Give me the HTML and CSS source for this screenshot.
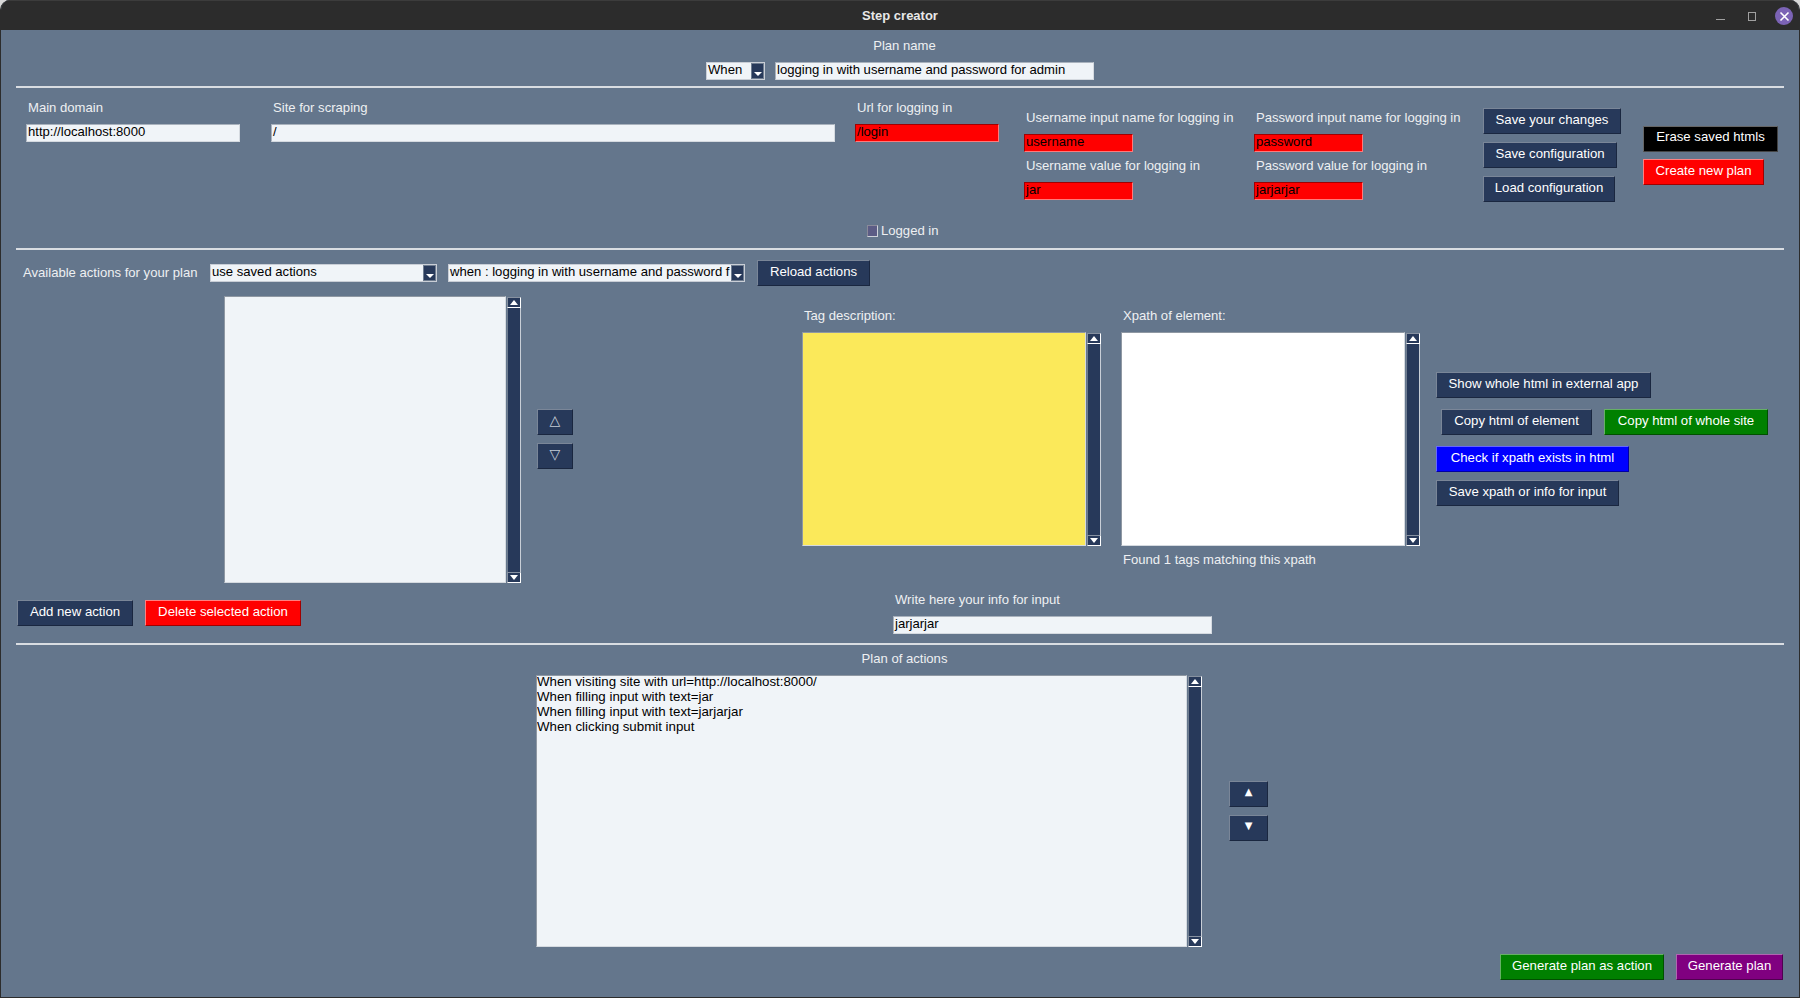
FILE: index.html
```html
<!DOCTYPE html>
<html lang="en">
<head>
<meta charset="utf-8">
<title>Step creator</title>
<link rel="stylesheet" href="styles.css">
</head>
<body>
<div class="window">
  <header class="titlebar">
    <div class="title">Step creator</div>
    <div class="controls">
      <span class="ctl-min"></span>
      <span class="ctl-max"></span>
      <span class="ctl-close"><svg width="11" height="11" viewBox="0 0 11 11"><path d="M1.5 1.5l8 8M9.5 1.5l-8 8" stroke="#fff" stroke-width="1.6" fill="none"/></svg></span>
    </div>
  </header>

  <section class="plan-head">
    <div class="label center">Plan name</div>
    <div class="plan-row">
      <div class="combo w-when"><span class="combo-text">When</span><span class="combo-btn"><i class="arrow"></i></span></div>
      <div class="entry w-plan">logging in with username and password for admin</div>
    </div>
  </section>
  <div class="sep"></div>

  <section class="config">
    <div class="config-row">
      <div class="field f-domain">
        <div class="label lbl-in">Main domain</div>
        <div class="entry">http://localhost:8000</div>
      </div>
      <div class="field f-site">
        <div class="label lbl-in">Site for scraping</div>
        <div class="entry">/</div>
      </div>
      <div class="field f-url">
        <div class="label lbl-in">Url for logging in</div>
        <div class="entry red">/login</div>
      </div>
      <div class="login-grid">
        <div class="field">
          <div class="label lbl-in">Username input name for logging in</div>
          <div class="entry red w-cred">username</div>
        </div>
        <div class="field">
          <div class="label lbl-in">Password input name for logging in</div>
          <div class="entry red w-cred">password</div>
        </div>
        <div class="field">
          <div class="label lbl-in">Username value for logging in</div>
          <div class="entry red w-cred">jar</div>
        </div>
        <div class="field">
          <div class="label lbl-in">Password value for logging in</div>
          <div class="entry red w-cred">jarjarjar</div>
        </div>
      </div>
      <div class="config-btns">
        <div class="btn navy w-138">Save your changes</div>
        <div class="btn navy w-134">Save configuration</div>
        <div class="btn navy w-132">Load configuration</div>
      </div>
      <div class="plan-btns">
        <div class="btn black w-135">Erase saved htmls</div>
        <div class="btn redb w-121">Create new plan</div>
      </div>
    </div>
    <div class="logged"><span class="check"></span><span class="label">Logged in</span></div>
  </section>
  <div class="sep"></div>

  <section class="actions">
    <div class="actions-top">
      <div class="label lbl-avail">Available actions for your plan</div>
      <div class="combo w-use"><span class="combo-text">use saved actions</span><span class="combo-btn"><i class="arrow"></i></span></div>
      <div class="combo w-saved"><span class="combo-text">when : logging in with username and password f</span><span class="combo-btn"><i class="arrow"></i></span></div>
      <div class="btn navy w-113">Reload actions</div>
    </div>
    <div class="actions-body">
      <div class="left-col">
        <div class="list-row">
          <div class="textbox light w-list"></div>
          <div class="scrollbar"><span class="sb-btn"><i class="tri-up"></i></span><span class="sb-trough"></span><span class="sb-btn"><i class="tri-down"></i></span></div>
          <div class="move-btns">
            <div class="btn navy sq36 dim">△</div>
            <div class="btn navy sq36 dim">▽</div>
          </div>
        </div>
        <div class="left-actions">
          <div class="btn navy w-116">Add new action</div>
          <div class="btn redb w-156">Delete selected action</div>
        </div>
      </div>
      <div class="mid-col">
        <div class="boxes">
          <div class="box-col">
            <div class="label lbl-in">Tag description:</div>
            <div class="box-row">
              <div class="textbox yellow w-box"></div>
              <div class="scrollbar"><span class="sb-btn"><i class="tri-up"></i></span><span class="sb-trough"></span><span class="sb-btn"><i class="tri-down"></i></span></div>
            </div>
          </div>
          <div class="box-col">
            <div class="label lbl-in">Xpath of element:</div>
            <div class="box-row">
              <div class="textbox white w-box"></div>
              <div class="scrollbar"><span class="sb-btn"><i class="tri-up"></i></span><span class="sb-trough"></span><span class="sb-btn"><i class="tri-down"></i></span></div>
            </div>
            <div class="label lbl-in found">Found 1 tags matching this xpath</div>
          </div>
        </div>
        <div class="info">
          <div class="label lbl-in">Write here your info for input</div>
          <div class="entry w-info">jarjarjar</div>
        </div>
      </div>
      <div class="right-col">
        <div class="btn navy w-215">Show whole html in external app</div>
        <div class="copy-row">
          <div class="btn navy w-151">Copy html of element</div>
          <div class="btn green w-164">Copy html of whole site</div>
        </div>
        <div class="btn blue w-193">Check if xpath exists in html</div>
        <div class="btn navy w-183 save-x">Save xpath or info for input</div>
      </div>
    </div>
  </section>
  <div class="sep"></div>

  <section class="plan">
    <div class="label center">Plan of actions</div>
    <div class="plan-body">
      <div class="textbox light w-plan-box">
        <div class="plan-lines">
          <div>When visiting site with url=http://localhost:8000/</div>
          <div>When filling input with text=jar</div>
          <div>When filling input with text=jarjarjar</div>
          <div>When clicking submit input</div>
        </div>
      </div>
      <div class="scrollbar"><span class="sb-btn"><i class="tri-up"></i></span><span class="sb-trough"></span><span class="sb-btn"><i class="tri-down"></i></span></div>
      <div class="plan-move">
        <div class="btn navy sq39">▲</div>
        <div class="btn navy sq39">▼</div>
      </div>
    </div>
    <div class="plan-foot">
      <div class="btn green w-164">Generate plan as action</div>
      <div class="btn purple w-107">Generate plan</div>
    </div>
  </section>
</div>
</body>
</html>
```

FILE: styles.css
```css
* { box-sizing: border-box; }
html, body { margin: 0; padding: 0; }
body {
  width: 1800px;
  height: 998px;
  overflow: hidden;
  background: #d8d8d8;
  font-family: "Liberation Sans", Arial, sans-serif;
  font-size: 13.1px;
  line-height: 15px;
}
.window {
  width: 1800px;
  height: 998px;
  display: flex;
  flex-direction: column;
  background: #64768c;
  border: 1px solid #2c2c2c;
  border-top: 0;
  border-radius: 10px 10px 0 0;
  overflow: hidden;
}
.titlebar {
  height: 30px;
  flex: none;
  background: #2c2c2c;
  border-top: 1px solid #3c3c3c;
  display: flex;
  align-items: center;
  justify-content: center;
  position: relative;
}
.title { color: #e8e8e8; font-weight: bold; font-size: 13px; }
.controls {
  position: absolute;
  right: 6px;
  top: 6px;
  display: flex;
  align-items: center;
}
.ctl-min { width: 9px; height: 1px; background: #a0a0a0; margin-top: 7px; margin-right: 23px; }
.ctl-max { width: 8px; height: 9px; border: 1px solid #a0a0a0; margin-right: 19px; }
.ctl-close {
  width: 18px; height: 18px; border-radius: 50%;
  background: #7b63b5;
  display: flex; align-items: center; justify-content: center;
}

.label { color: #eef0f2; white-space: nowrap; }
.center { text-align: center; padding-left: 9px; }
.lbl-in { padding-left: 2px; }

.sep { height: 2px; margin: 0 15px; flex: none; background: #d9dde2; }

.entry {
  height: 18px;
  background: #f0f4f8;
  color: #000;
  border: 1px solid;
  border-color: #a9b2bd #d5dae0 #d5dae0 #a9b2bd;
  padding: 0 0 0 1px;
  line-height: 14px;
  white-space: nowrap;
  overflow: hidden;
}
.entry.red { background: #ff0000; border-color: #a00000 #ff7a7a #ff7a7a #a00000; color: #000; }

.plan-head { height: 56px; padding-top: 8px; flex: none; }
.plan-row { display: flex; justify-content: center; gap: 10px; margin-top: 9px; }
.w-when { width: 59px; }
.w-plan { width: 319px; }

.combo {
  height: 18px;
  display: flex;
  background: #f0f4f8;
  border: 1px solid #c9ced6;
  color: #000;
  overflow: hidden;
  line-height: 14px;
}
.combo-text { flex: 1; min-width: 0; overflow: hidden; white-space: nowrap; padding-left: 1px; }
.combo-btn {
  width: 13px; flex: none;
  background: #27395a;
  border: 1px solid #6f7d90;
  display: flex; align-items: flex-end; justify-content: center;
  padding-bottom: 2px;
}
.arrow, .tri-down { width: 0; height: 0; border-left: 4px solid transparent; border-right: 4px solid transparent; border-top: 4px solid #fff; }
.tri-up { width: 0; height: 0; border-left: 4px solid transparent; border-right: 4px solid transparent; border-bottom: 5px solid #fff; }
.tri-down { border-top-width: 5px; }

.config { height: 160px; flex: none; padding: 12px 0 0 25px; position: relative; }
.config-row { display: flex; height: 112px; align-items: flex-start; }
.field { display: flex; flex-direction: column; gap: 9px; }
.f-domain { width: 214px; margin-right: 31px; }
.f-site { width: 564px; margin-right: 20px; }
.f-url { width: 144px; margin-right: 25px; }
.login-grid {
  display: grid;
  grid-template-columns: 230px 229px;
  row-gap: 6px;
  margin-top: 10px;
  width: 459px;
}
.w-cred { width: 109px; }
.config-btns { display: flex; flex-direction: column; gap: 8px; width: 159px; margin-top: 8px; }
.plan-btns { display: flex; flex-direction: column; gap: 7px; margin-top: 26px; margin-left: 1px; }
.plan-btns .black { line-height: 20px; }

.btn {
  height: 26px;
  flex: none;
  color: #fff;
  border: 1px solid;
  text-align: center;
  font-size: 13.2px;
  line-height: 22px;
  white-space: nowrap;
}
.navy { background: #27395a; border-color: #7a8698 #1a2740 #1a2740 #7a8698; }
.black { background: #000; border-color: #666 #444 #444 #666; }
.redb { background: #ff0000; border-color: #ff8080 #a00000 #a00000 #ff8080; }
.green { background: #008000; border-color: #66b066 #005000 #005000 #66b066; }
.blue { background: #0000ff; border-color: #6666ff #0000a0 #0000a0 #6666ff; }
.purple { background: #800080; border-color: #b066b0 #500050 #500050 #b066b0; }

.w-138 { width: 138px; } .w-134 { width: 134px; } .w-132 { width: 132px; }
.w-135 { width: 135px; } .w-121 { width: 121px; } .w-113 { width: 113px; }
.w-116 { width: 116px; } .w-156 { width: 156px; } .w-215 { width: 215px; }
.w-151 { width: 151px; } .w-164 { width: 164px; } .w-193 { width: 193px; }
.w-183 { width: 183px; } .w-107 { width: 107px; }

.logged { display: flex; align-items: center; gap: 3px; margin-left: 841px; margin-top: 11px; height: 15px; }
.check { width: 11px; height: 12px; background: #5c5c85; border: 1px solid; border-color: #8a8a9a #cfd3d9 #cfd3d9 #8a8a9a; }

.actions { height: 393px; flex: none; padding-top: 10px; }
.actions-top { display: flex; align-items: center; height: 26px; padding-left: 22px; }
.lbl-avail { width: 187px; padding-bottom: 2px; }
.w-use { width: 227px; margin-right: 11px; }
.w-saved { width: 297px; margin-right: 12px; }
.actions-body { display: flex; margin-top: 10px; }
.left-col { width: 572px; padding-left: 16px; flex: none; }
.list-row { display: flex; height: 287px; padding-left: 207px; gap: 1px; }
.textbox {
  border: 1px solid;
  border-color: #8f98a3 #d5dae0 #d5dae0 #8f98a3;
  color: #000;
  overflow: hidden;
}
.light { background: #f0f4f8; }
.white { background: #fff; }
.yellow { background: #fbe95a; }
.w-list { width: 283px; }
.w-box { width: 285px; }
.scrollbar { width: 14px; display: flex; flex-direction: column; flex: none; margin-top: 1px; background: #27395a; }
.sb-btn {
  height: 11px; flex: none;
  background: #27395a;
  border: 1px solid #fff;
  border-top-color: #8791a0;
  border-left-color: #8791a0;
  display: flex; align-items: center; justify-content: center;
}
.sb-trough { flex: 1; background: #27395a; border: 1px solid; border-color: #6f7d90 #c8ced6 #6f7d90 #6f7d90; border-top: 0; border-bottom: 0; }
.move-btns { display: flex; flex-direction: column; gap: 8px; margin: 113px 0 0 15px; }
.sq36 { width: 36px; font-family: "DejaVu Sans", sans-serif; font-size: 14px; line-height: 20px; }
.dim { color: #c4ccd6; }
.left-actions { display: flex; gap: 12px; margin-top: 17px; }

.mid-col { width: 634px; margin-left: 229px; flex: none; padding-top: 12px; }
.boxes { display: flex; gap: 20px; }
.box-col { display: flex; flex-direction: column; gap: 9px; width: 299px; }
.box-row { display: flex; gap: 1px; height: 214px; }
.found { margin-top: -3px; }
.info { margin: 25px 0 0 91px; display: flex; flex-direction: column; gap: 9px; }
.w-info { width: 319px; }

.right-col { padding-top: 76px; flex: none; margin-left: 0; }
.copy-row { display: flex; gap: 12px; margin: 11px 0 11px 5px; }
.save-x { margin-top: 8px; }

.plan { flex: 1; padding-top: 6px; }
.plan-body { display: flex; margin-top: 9px; height: 272px; padding-left: 535px; gap: 1px; }
.w-plan-box { width: 651px; font-size: 13.3px; line-height: 15px; padding: 0; }
.plan-lines { margin-top: -2px; }
.plan-move { display: flex; flex-direction: column; gap: 8px; margin: 106px 0 0 26px; }
.sq39 { width: 39px; font-family: "DejaVu Sans", sans-serif; font-size: 10px; line-height: 20px; }
.plan-foot { display: flex; justify-content: flex-end; gap: 12px; margin-top: 7px; padding-right: 16px; }
```
